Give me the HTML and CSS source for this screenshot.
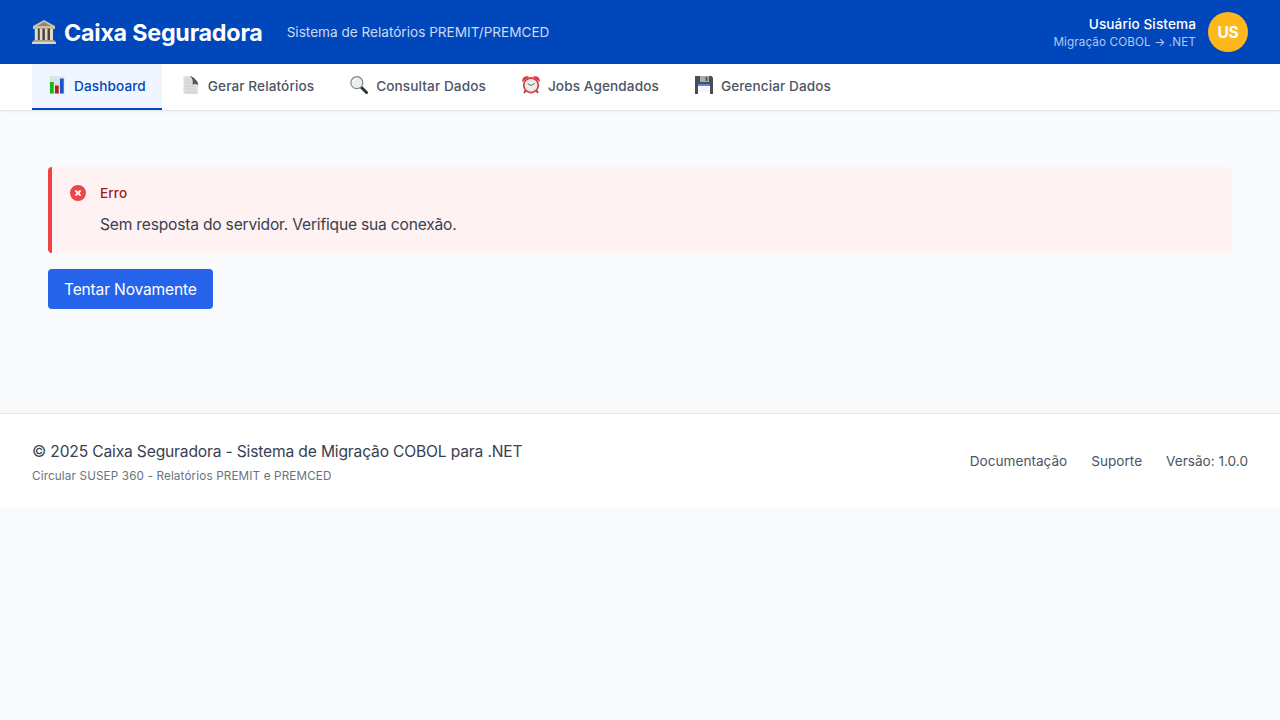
FILE: index.html
```html
<!DOCTYPE html>
<html lang="pt-BR"><head><meta charset="utf-8"><title>Caixa Seguradora</title><link rel="stylesheet" href="styles.css"></head>
<body>
<header class="header"><div class="brand"><h1 class="logo"><svg class="logo-icon" viewBox="0 0 24 24"><path fill="#c9c2ab" d="M1 6 12 0l11 6v3H1z"/><path fill="#8d8873" d="M5 6 12 2l7 4z"/><path fill="#4d4737" d="M3 8.5h18v12H3z"/><path fill="#e3dcc7" d="M2.8 8.5h3v12h-3zm5 0h2.6v12H7.8zm5.1 0h2.6v12h-2.6zm5.1 0h3v12h-3z"/><path fill="#aaa38c" d="M1.5 20h21v2h-21z"/><path fill="#ddd5bf" d="M0 21.7h24V24H0z"/></svg><span>Caixa Seguradora</span></h1><span class="subtitle">Sistema de Relatórios PREMIT/PREMCED</span></div>
<div class="user"><div><div class="user-name">Usuário Sistema</div><div class="user-note">Migração COBOL → .NET</div></div><div class="avatar"><span>US</span></div></div></header>
<nav class="nav">
<a class="tab active"><svg class="icon" viewBox="0 0 18 18"><path fill="#dce5eb" d="M1.5 0h15v18h-15z"/><path stroke="#c4d1da" stroke-width=".5" d="M2 4h14M2 8h14M2 12h14"/><path fill="#16b51b" d="M2 6h3.7v11.5H2z"/><path fill="#c9141e" d="M7 9.5h3.7v8H7z"/><path fill="#1458c5" d="M12 2.5h3.7v15H12z"/></svg>Dashboard</a>
<a class="tab"><svg class="icon" viewBox="0 0 18 18"><path fill="#dedede" d="M1.5 0h7L16 7.5V18H1.5z"/><path fill="#555" d="M8 0c4 1.2 8 5 8.5 9-2-1.2-4-1.5-6-.5.8-3 .2-6-2.5-8.5z"/><path stroke="#c4c4c4" stroke-width=".6" d="M3 4h5M3 7h6M3 10h10M3 13h10M3 16h10"/></svg>Gerar Relatórios</a>
<a class="tab"><svg class="icon" viewBox="0 0 18 18"><path stroke="#333" stroke-width="3" stroke-linecap="round" d="m11.5 11.5 5 5"/><circle cx="6.8" cy="6.7" r="6" fill="#e9eff2" stroke="#858789" stroke-width="1.2"/><path d="M3 6a4 4 0 0 1 4-3" fill="none" stroke="#fff" stroke-width="1.3"/></svg>Consultar Dados</a>
<a class="tab"><svg class="icon" viewBox="0 0 18 18"><path stroke="#9a3335" stroke-width="1.6" d="m4 14-2 3m12-3 2 3"/><path fill="#d83b40" d="M.3 6C-.5 2 3-.8 7 .8zM17.7 6C18.500 2 15-.8 11 .8z"/><circle cx="9" cy="9.3" r="7.300" fill="#eeeeea" stroke="#d44348" stroke-width="1.8"/><circle cx="9" cy="9.3" r="5" fill="none" stroke="#aaa" stroke-width=".7" stroke-dasharray=".5 2.1"/><path d="m5.800 7.700 3.200 1.800 3.500-2" fill="none" stroke="#444" stroke-width=".8"/></svg>Jobs Agendados</a>
<a class="tab"><svg class="icon" viewBox="0 0 18 18"><path fill="#4a4d51" d="M0 0h16.5L18 1.5V18H0z"/><path fill="#a9adb0" d="M5 0h9v6H5z"/><path fill="#555" d="M10.500 1h2v4h-2z"/><path fill="#fff" d="M3 8h12v10H3z"/><path fill="#438fe0" d="M3 8h12v2H3z"/><path stroke="#cbdbea" stroke-width=".6" d="M4 12h10M4 15h10"/></svg>Gerenciar Dados</a></nav>
<main class="main"><div class="alert"><svg class="alert-icon" viewBox="0 0 20 20" fill="currentColor"><path fill-rule="evenodd" clip-rule="evenodd" d="M10 18a8 8 0 100-16 8 8 0 000 16zM8.707 7.293a1 1 0 00-1.414 1.414L8.586 10l-1.293 1.293a1 1 0 101.414 1.414L10 11.414l1.293 1.293a1 1 0 001.414-1.414L11.414 10l1.293-1.293a1 1 0 00-1.414-1.414L10 8.586 8.707 7.293z"/></svg><div><h3 class="alert-title">Erro</h3><p class="alert-text">Sem resposta do servidor. Verifique sua conexão.</p></div></div>
<button class="retry">Tentar Novamente</button></main>
<footer class="footer"><div><p class="copyright">© 2025 Caixa Seguradora - Sistema de Migração COBOL para .NET</p><p class="circular">Circular SUSEP 360 - Relatórios PREMIT e PREMCED</p></div><div class="links"><a>Documentação</a><a>Suporte</a><span>Versão: 1.0.0</span></div></footer>
</body></html>
```
FILE: styles.css
```css
* { box-sizing: border-box; margin: 0; padding: 0; }
body { font: 15.6px/24px Inter, sans-serif; letter-spacing: -.2px; color: #374151; background: #f9fafb; }
.header { height: 64px; padding: 0 32px; background: #0047bb; color: #fff; display: flex; align-items: center; justify-content: space-between; }
.brand { display: flex; align-items: center; gap: 24px; }
.logo { display: flex; align-items: center; gap: 8px; font-size: 23.3px; line-height: 32px; font-weight: 700; letter-spacing: -.23px; }
.logo-icon { width: 24px; height: 24px; }
.logo span { padding-top: 2px; }
.subtitle { font-size: 13.6px; line-height: 20px; letter-spacing: 0; color: #ccdaf1; }
.user { display: flex; align-items: center; gap: 12px; text-align: right; }
.user-name { font-size: 13.6px; line-height: 20px; font-weight: 500; letter-spacing: .1px; }
.user-note { font-size: 11.7px; line-height: 16px; letter-spacing: .11px; color: #b3c8eb; }
.avatar { width: 40px; height: 40px; border-radius: 50%; background: #ffb81c; display: grid; place-items: center; font-weight: 700; }
.avatar span { padding-top: 2px; }
.nav { height: 47px; padding: 0 32px; display: flex; gap: 4px; background: #fff; border-bottom: 1px solid #e5e7eb; box-shadow: 0 1px 2px rgba(0,0,0,.05); }
.tab { display: flex; align-items: center; gap: 8px; padding: 0 16px; border-bottom: 2px solid transparent; font-size: 13.6px; font-weight: 500; letter-spacing: .1px; color: #4b5563; }
.icon { width: 18px; height: 18px; margin-top: -3px; }
.active { color: #0047bb; background: #eff6ff; border-color: #0047bb; }
.main { padding: 56px 48px 104px; }
.alert { height: 86px; padding: 16px; display: flex; gap: 12px; background: #fef2f2; border-left: 4px solid #ef4444; border-radius: 4px; }
.alert-icon { width: 20px; height: 20px; color: #ef4444; }
.alert-title { font-size: 13.6px; line-height: 20px; letter-spacing: .1px; font-weight: 500; color: #991b1b; margin-bottom: 10px; }
.retry { display: block; margin-top: 16px; height: 40px; padding: 2px 16px 0; border: 0; border-radius: 4px; background: #2563eb; color: #fff; font: inherit; letter-spacing: -.18px; }
.footer { height: 95px; padding: 2px 32px 0; background: #fff; border-top: 1px solid #e5e7eb; display: flex; justify-content: space-between; align-items: center; }
.copyright { letter-spacing: -.16px; }
.circular { font-size: 11.7px; line-height: 16px; letter-spacing: .14px; color: #6b7280; margin-top: 4px; }
.links { display: flex; gap: 24px; padding-bottom: 2px; font-size: 13.6px; line-height: 20px; letter-spacing: 0; color: #4b5563; }
```
